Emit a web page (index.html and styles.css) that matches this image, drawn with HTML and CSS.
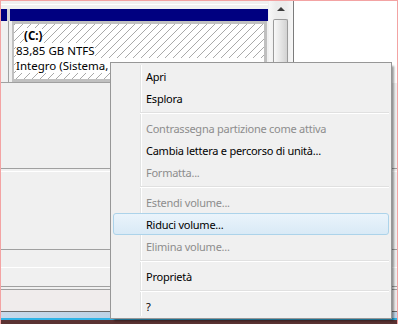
FILE: index.html
```html
<!DOCTYPE html>
<html>
  <head>
    <meta http-equiv="Content-Type" content="text/html; charset=UTF-8" />
    <title>Gestione disco</title>
    <link rel="stylesheet" href="styles.css">
  </head>
  <body>
    <div class="screen">
      <div class="top">
        <div class="volumes">
          <div class="header-strip"></div>
          <div class="header-row">
            <div class="bar bar-small"></div>
            <div class="bar bar-big"></div>
          </div>
          <div class="disk-row">
            <div class="disk-label"></div>
            <div class="partition">
              <div class="line bold"><span>(C:)</span></div>
              <div class="line"><span>83,85 GB NTFS</span></div>
              <div class="line"><span>Integro (Sistema, Avvio, File di paging, Attivo, Partizione primaria)</span></div>
            </div>
          </div>
        </div>
        <div class="scrollbar">
          <div class="scroll-arrow"></div>
          <div class="scroll-thumb"></div>
        </div>
        <div class="blank"></div>
      </div>

      <div class="lower">
        <div class="band band-a"></div>
        <div class="band band-b"></div>
        <div class="band band-c"></div>
        <div class="band band-d"></div>
        <div class="band band-e"></div>
        <div class="band band-f"></div>
        <div class="band band-g"></div>
        <div class="taskbar"></div>
        <div class="desktop"></div>
      </div>

      <ul class="menu">
        <li class="item">Apri</li>
        <li class="item">Esplora</li>
        <li class="separator"></li>
        <li class="item disabled">Contrassegna partizione come attiva</li>
        <li class="item">Cambia lettera e percorso di unità...</li>
        <li class="item disabled">Formatta...</li>
        <li class="separator"></li>
        <li class="item disabled">Estendi volume...</li>
        <li class="item active">Riduci volume...</li>
        <li class="item disabled">Elimina volume...</li>
        <li class="separator"></li>
        <li class="item">Proprietà</li>
        <li class="separator"></li>
        <li class="item">?</li>
      </ul>
    </div>
  </body>
</html>
```

FILE: styles.css
```css
body {
  margin: 0;
  background-color: white;
  font-family: "Noto Sans", "Open Sans", sans-serif;
  font-size: 11px;
  color: black;
}

.screen {
  position: relative;
  width: 398px;
  height: 324px;
  box-sizing: border-box;
  border-top: 1px solid #f3a3a3;
  border-left: 1px solid #f3a3a3;
  border-right: 1px solid #f3a3a3;
  overflow: hidden;
}

.top {
  display: flex;
  height: 82px;
  background-color: #f0f0f0;
}

.volumes {
  display: flex;
  flex-direction: column;
  width: 267px;
}

.header-strip {
  height: 9px;
  background: linear-gradient(#f0f0f0 0 3px, #ffffff 3px 4px, #f0f0f0 4px);
}

.header-row {
  display: flex;
  height: 13px;
  background-color: #d4d4d4;
}

.bar {
  background-color: #000080;
}

.bar-small {
  width: 6px;
}

.bar-big {
  width: 258px;
  margin-left: 3px;
}

.disk-row {
  display: flex;
  flex: 1;
  border-bottom: 1px solid #a0a0a0;
}

.disk-label {
  width: 7px;
  border-right: 1px solid #a0a0a0;
}

.partition {
  width: 250px;
  height: 51px;
  margin-left: 3px;
  border-style: solid;
  border-color: #c0c0c0;
  border-width: 3px 3px 3px 2px;
  padding-top: 4px;
  font-size: 11.5px;
  background: repeating-linear-gradient(135deg, #a9a9a9 0 1px, #ffffff 1px 5.66px);
  overflow: hidden;
}

.line {
  height: 15px;
  line-height: 15px;
  padding-left: 2px;
  white-space: nowrap;
}

.line span {
  background-color: white;
}

.line.bold {
  padding-left: 10px;
  font-weight: bold;
}

.scrollbar {
  display: flex;
  flex-direction: column;
  width: 24px;
  margin-left: 1px;
  border-right: 1px solid #7c7c7c;
  background: linear-gradient(to right, #f7f7f7, #ececec 30%, #ececec 70%, #f7f7f7);
}

.scroll-arrow {
  width: 0;
  height: 0;
  margin: 6px auto 0 auto;
  border-left: 4px solid transparent;
  border-right: 4px solid transparent;
  border-bottom: 4px solid #3c3c3c;
}

.scroll-thumb {
  flex: 1;
  width: 13px;
  margin-top: 8px;
  margin-left: 4px;
  border: 1px solid #9b9b9b;
  border-bottom: none;
  border-radius: 2px 2px 0 0;
  background: linear-gradient(to right, #f8f8f8, #e6e6e6 50%, #d2d2d2);
}

.blank {
  flex: 1;
  background-color: white;
}

.lower {
  display: flex;
  flex-direction: column;
}

.band {
  background-color: #f0f0f0;
}

.band-a {
  height: 85px;
  border-bottom: 1px solid #a0a0a0;
}

.band-b {
  height: 2px;
  border-bottom: 1px solid #ffffff;
}

.band-c {
  height: 77px;
  border-bottom: 1px solid #a0a0a0;
}

.band-d {
  height: 17px;
  border-bottom: 1px solid #ffffff;
}

.band-e {
  height: 18px;
  border-bottom: 1px solid #a0a0a0;
}

.band-f {
  height: 2px;
  border-bottom: 1px solid #a0a0a0;
}

.band-g {
  height: 21px;
  background-color: #f0ecec;
  border-bottom: 1px solid #6a6a6a;
}

.taskbar {
  height: 6px;
  background: linear-gradient(to right, #c7d9ea, #b4cde2 50%, #c2d6e8);
  border-bottom: 2px solid #2fb3e6;
}

.desktop {
  height: 4px;
  background-color: #5a3232;
}

.menu {
  position: absolute;
  left: 109px;
  top: 61px;
  width: 276px;
  margin: 0;
  padding: 2px 2px 1px 2px;
  list-style: none;
  background-color: #f0f0f0;
  border: 1px solid #979797;
  box-shadow: 3px 3px 2px -1px rgba(0, 0, 0, 0.4);
  letter-spacing: -0.25px;
}

.menu::before {
  content: "";
  position: absolute;
  left: 29px;
  top: 2px;
  bottom: 2px;
  width: 1px;
  background-color: #e2e3e3;
  border-right: 1px solid #ffffff;
}

.item {
  position: relative;
  height: 22px;
  line-height: 22px;
  padding-left: 32px;
  white-space: nowrap;
  border: 1px solid transparent;
  box-sizing: border-box;
}

.item.disabled {
  color: #8d8d8d;
}

.item.active {
  background: linear-gradient(#eaf4fb, #d9eaf6);
  border-color: #acd3ea;
  border-radius: 3px;
}

.separator {
  position: relative;
  height: 8px;
  margin-left: 27px;
  box-sizing: border-box;
  padding-top: 3px;
}

.separator::after {
  content: "";
  display: block;
  height: 1px;
  background-color: #e0e0e0;
  border-bottom: 1px solid #ffffff;
}
```
